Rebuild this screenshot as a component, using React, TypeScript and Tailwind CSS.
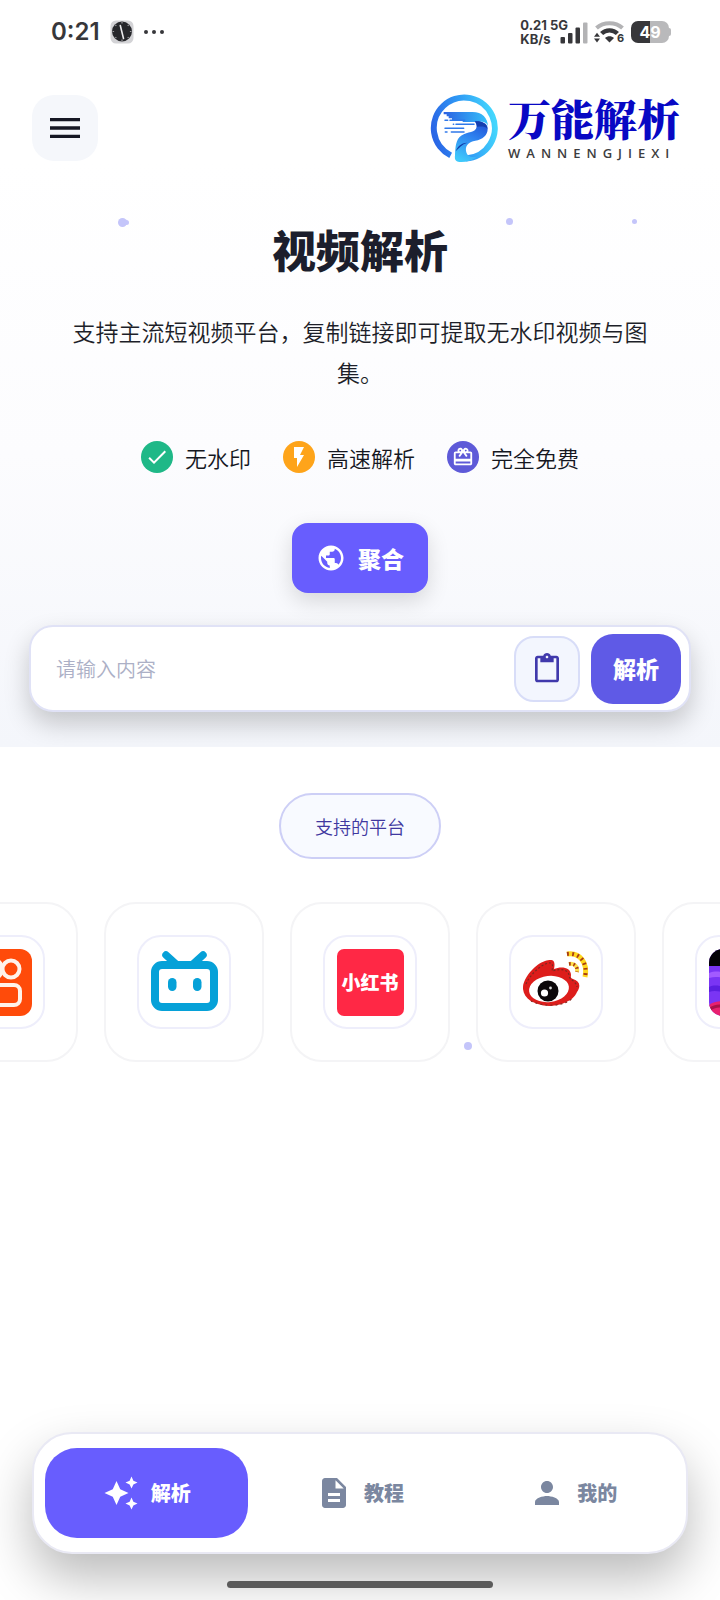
import type { ReactNode } from "react";
import {
  MdAutoAwesome,
  MdCardGiftcard,
  MdCheck,
  MdContentPaste,
  MdDescription,
  MdFlashOn,
  MdMenu,
  MdPerson,
  MdPublic,
} from "react-icons/md";

function ClockAppIcon() {
  return (
    <svg viewBox="0 0 24 24" className="size-6" aria-hidden="true">
      <rect x="0.5" y="0.5" width="23" height="23" rx="5.5" fill="#d3d3d6" />
      <circle cx="12" cy="11.5" r="10" fill="#26272b" />
      <g stroke="#9b9b9f" strokeWidth="1.2">
        <path d="M12 2v1.6M12 19.4V21M2.5 11.5h1.6M19.9 11.5h1.6" />
        <path d="M5.3 4.8l1 1M17.7 17.2l1 1M18.7 4.8l-1 1M6.3 17.2l-1 1" />
      </g>
      <path d="M10.3 5.5l3.2 13" stroke="#e9e9eb" strokeWidth="1.6" strokeLinecap="round" />
    </svg>
  );
}

function SignalIcon() {
  return (
    <svg viewBox="0 0 28 22" className="h-[22px] w-7" aria-hidden="true">
      <rect x="0.5" y="15" width="4.5" height="6.5" rx="1" fill="#37373a" />
      <rect x="8" y="11" width="4.5" height="10.5" rx="1" fill="#37373a" />
      <rect x="15.5" y="5.5" width="4.5" height="16" rx="1" fill="#37373a" />
      <rect x="23" y="0.5" width="4.5" height="21" rx="1" fill="#b3b3b5" />
    </svg>
  );
}

function WifiIcon() {
  return (
    <svg viewBox="0 0 31 26" className="h-[26px] w-[31px]" aria-hidden="true">
      <path d="M2.5 9C9.500 2.500 21.500 2.500 28.500 9" fill="none" stroke="#b3b3b5" strokeWidth="4" />
      <path d="M7.600 14.500C11.800 10.300 19.200 10.300 23.400 14.500" fill="none" stroke="#37373a" strokeWidth="4.400" />
      <path d="M11 19c2.600-2.300 6.400-2.300 9 0L15.500 23.400z" fill="#37373a" />
      <path d="M0 17.800L3 13.800l3 4zM0 19.600L3 23.600l3-4z" fill="#37373a" />
      <text x="23" y="23" fontSize="11" fontWeight="700" fill="#37373a" fontFamily="Inter, sans-serif">
        6
      </text>
    </svg>
  );
}

function StatusBar() {
  return (
    <div className="flex h-16 items-center justify-between pr-[49px] pl-[51px] font-['Inter','Noto_Sans',sans-serif] text-[#37373a]">
      <div className="flex items-center">
        <span className="text-2xl font-semibold">0:21</span>
        <span className="ml-2.5">
          <ClockAppIcon />
        </span>
        <span className="ml-2.5 flex gap-1">
          <i className="size-1 rounded-full bg-[#37373a]" />
          <i className="size-1 rounded-full bg-[#37373a]" />
          <i className="size-1 rounded-full bg-[#37373a]" />
        </span>
      </div>
      <div className="flex items-center">
        <div className="text-[13px] leading-[14px] font-bold">
          <div>0.21 5G</div>
          <div>KB/s</div>
        </div>
        <div className="-ml-2 pt-0.5">
          <SignalIcon />
        </div>
        <div className="ml-1.5">
          <WifiIcon />
        </div>
        <div className="ml-1.5 flex items-center">
          <div className="flex h-[22px] w-[38px] items-center justify-center rounded-[7px] bg-linear-to-r from-[#37373a] from-50% to-[#b9b9bb] to-50% text-base font-bold text-white">
            49
          </div>
          <div className="h-2 w-0.5 rounded-r-sm bg-[#b9b9bb]" />
        </div>
      </div>
    </div>
  );
}

function BrandMark() {
  return (
    <svg viewBox="0 0 204 204" className="size-[68px]" aria-hidden="true">
      <defs>
        <linearGradient id="ring" x1="0" y1="0.6" x2="1" y2="0.4">
          <stop offset="0" stopColor="#2a66e6" />
          <stop offset="0.5" stopColor="#2f9af5" />
          <stop offset="1" stopColor="#44d6fd" />
        </linearGradient>
        <linearGradient id="band" x1="0" y1="0" x2="1" y2="0">
          <stop offset="0" stopColor="#2c62e2" />
          <stop offset="1" stopColor="#35c0fa" />
        </linearGradient>
        <linearGradient id="stem" x1="0.7" y1="0" x2="0.3" y2="1">
          <stop offset="0" stopColor="#2257d8" />
          <stop offset="0.4" stopColor="#2f83f0" />
          <stop offset="1" stopColor="#3fc9fb" />
        </linearGradient>
      </defs>
      <path
        d="M62 184A91.500 91.500 0 1 1 108 193.500"
        fill="none"
        stroke="url(#ring)"
        strokeWidth="18"
      />
      <path
        d="M41 54H128C156 54 174 72 174 98C172 86 160 82 148 84H98V78H66V73H56V67H50V61H41Z"
        fill="url(#band)"
      />
      <g stroke="#2f78ea" strokeWidth="4.500" strokeLinecap="round">
        <path d="M45 79h8M60 79h44M78 91h54M70 91h1M45 103h56M64 114h38M46 114h5" />
      </g>
      <path
        d="M134 82C152 80 172 86 173 102C174 124 158 136 136 140C114 144 106 156 108 170C110 186 124 192 142 188C124 202 100 206 84 203C74 201 74 192 75 184C76 166 76 144 88 130C104 112 130 118 138 104C142 96 138 88 134 82Z"
        fill="url(#stem)"
      />
      <path d="M134 82C152 80 172 88 172 104C165 95 150 98 141 98C141 92 138 86 134 82Z" fill="#153fae" />
      <path d="M77 172C82 158 92 147 112 146C96 151 86 162 77 172Z" fill="#123ba8" />
    </svg>
  );
}

function Header() {
  return (
    <header className="flex items-start justify-between px-8 pt-[31px]">
      <button
        type="button"
        aria-label="菜单"
        className="flex size-[66px] items-center justify-center rounded-[22px] bg-[#f5f7fb] text-[#161824]"
      >
        <MdMenu className="size-10" />
      </button>
      <a href="#home" className="-mt-px flex items-center gap-2.5 pr-2">
        <BrandMark />
        <span className="flex flex-col whitespace-nowrap">
          <span className="font-['Noto_Serif_CJK_SC','Noto_Serif_SC','Noto_Sans_CJK_SC',serif] text-[43px] leading-[46px] font-black text-[#0808c4]">
            万能解析
          </span>
          <span className="pt-1 font-['Open_Sans',sans-serif] text-[13px] leading-4 font-semibold tracking-[6px] text-[#3d3d40]">
            WANNENGJIEXI
          </span>
        </span>
      </a>
    </header>
  );
}

function Feature({ color, icon, label }: { color: string; icon: ReactNode; label: string }) {
  return (
    <li className="flex items-center gap-3">
      <span className={`flex size-8 items-center justify-center rounded-full text-white ${color}`}>{icon}</span>
      <span className="text-[22px] leading-8">{label}</span>
    </li>
  );
}

function Hero() {
  return (
    <section className="overflow-hidden bg-linear-to-b from-white via-[#fcfcfe] via-50% to-[#f4f6fb] px-[29px] pt-[51px] pb-[35px]">
      <h1 className="text-center text-[44px] leading-[72px] font-black text-[#1c1e2c]">视频解析</h1>
      <p className="mx-auto mt-[26px] max-w-[600px] text-center text-[23px] leading-[41px] font-[350] text-[#1d1f29]">
        支持主流短视频平台，复制链接即可提取无水印视频与图集。
      </p>
      <ul className="mt-12 flex justify-center gap-8 font-[350] text-[#15171f]">
        <Feature color="bg-[#1fb887]" icon={<MdCheck className="size-6" />} label="无水印" />
        <Feature color="bg-[#fea41a]" icon={<MdFlashOn className="size-6" />} label="高速解析" />
        <Feature color="bg-[#5e5ad8]" icon={<MdCardGiftcard className="size-[22px]" />} label="完全免费" />
      </ul>
      <div className="mt-[50px] flex justify-center">
        <button
          type="button"
          className="flex h-[70px] items-center gap-3 rounded-2xl bg-[#685dfe] px-6 text-[23px] font-black text-white shadow-[0_8px_22px_rgba(0,0,0,0.14)]"
        >
          <MdPublic className="size-[30px]" />
          聚合
        </button>
      </div>
      <form
        onSubmit={(e) => e.preventDefault()}
        className="mt-8 flex h-[87px] items-center gap-[11px] rounded-[24px] border-2 border-[#e0e2f6] bg-white pr-2 pl-[25px] shadow-[0_12px_26px_rgba(0,0,0,0.2)]"
      >
        <input
          type="text"
          aria-label="请输入内容"
          placeholder="请输入内容"
          className="min-w-0 flex-1 bg-transparent text-xl font-[350] text-[#1d1f29] outline-none placeholder:text-[#acb0c6]"
        />
        <button
          type="button"
          aria-label="粘贴"
          className="flex size-[66px] items-center justify-center rounded-[20px] border-2 border-[#d8ddf8] bg-[#f3f6fe] text-[#4039ac]"
        >
          <MdContentPaste className="size-8" />
        </button>
        <button
          type="submit"
          className="h-[70px] rounded-[22px] bg-[#5f5ae6] px-[22px] text-[23px] font-black text-white"
        >
          解析
        </button>
      </form>
    </section>
  );
}

function KuaishouLogo() {
  return (
    <svg viewBox="0 0 67 67" className="size-[67px]" role="img" aria-label="快手">
      <rect width="67" height="67" rx="12" fill="#ff4b0a" />
      <g fill="none" stroke="#fff3ea" strokeWidth="4">
        <circle cx="27" cy="20" r="10" />
        <circle cx="46" cy="20" r="8.500" />
        <rect x="20" y="36" width="35" height="20" rx="6" />
        <path d="M20 41l-9-4v18l9-4" />
      </g>
    </svg>
  );
}

function BilibiliLogo() {
  return (
    <svg viewBox="0 0 67 67" className="size-[67px]" role="img" aria-label="哔哩哔哩">
      <path d="M15 6l11 10M52 6L41 16" stroke="#06a1d8" strokeWidth="7.500" strokeLinecap="round" />
      <rect x="4" y="16" width="59" height="42" rx="7" fill="#fff" stroke="#06a1d8" strokeWidth="8" />
      <rect x="17" y="29" width="8.500" height="13" rx="4.200" fill="#06a1d8" />
      <rect x="42" y="29" width="8.500" height="13" rx="4.200" fill="#06a1d8" />
    </svg>
  );
}

function XiaohongshuLogo() {
  return (
    <div className="flex size-[67px] items-center justify-center rounded-[7px] bg-[#ff2845] text-[19px] font-black text-white">
      小红书
    </div>
  );
}

function WeiboLogo() {
  return (
    <svg viewBox="0 0 67 67" className="size-[67px]" role="img" aria-label="微博">
      <path
        d="M0 40C-1 30 12 15 22 12C29 10 33 10 31 20C38 17 48 18 48 26C48 28 47 29 50 30C57 32 58 37 54 43C50 53 35 57 26 57C11 56 1 50 0 40Z"
        fill="#dd1d1b"
      />
      <path
        d="M3 35C7 26 16 17 25 14C30 13 30 16 29 22C39 19 46 21 46 27C47 31 53 32 54 38"
        fill="none"
        stroke="#7a2a22"
        strokeWidth="1.200"
        strokeDasharray="2 2"
      />
      <path d="M8 52C20 58 40 58 50 49" fill="none" stroke="#8a2c24" strokeWidth="1.200" strokeDasharray="2 3" />
      <ellipse cx="26" cy="40" rx="20" ry="13" fill="#fff" transform="rotate(-7 26 40)" />
      <circle cx="25" cy="42" r="10.500" fill="#0b0709" />
      <circle cx="21.500" cy="44" r="3.600" fill="#fff" />
      <circle cx="27.500" cy="39" r="1.400" fill="#d9d9d9" />
      <path d="M44 5C57 3 65 14 62 28" fill="none" stroke="#ffd81f" strokeWidth="5" />
      <path d="M44 5C57 3 65 14 62 28" fill="none" stroke="#a83a12" strokeWidth="4" strokeDasharray="1.800 3.400" />
      <path d="M46 15C52 14 55 18 54 23" fill="none" stroke="#ffe04a" strokeWidth="4" />
      <path d="M46 15C52 14 55 18 54 23" fill="none" stroke="#a83a12" strokeWidth="3.500" strokeDasharray="1.600 2.800" />
    </svg>
  );
}

function VividLogo() {
  return (
    <svg viewBox="0 0 67 67" className="size-[67px]" role="img" aria-label="短视频">
      <defs>
        <clipPath id="vivid">
          <rect width="67" height="67" rx="14" />
        </clipPath>
      </defs>
      <g clipPath="url(#vivid)">
        <rect width="67" height="67" fill="#7a35f4" />
        <path d="M0 0H67V17H0Z" fill="#050308" />
        <path d="M0 24C10 20 16 26 30 22V27C18 31 9 26 0 29Z" fill="#a25bff" />
        <path d="M0 38C8 34 14 40 26 36V42C14 45 8 40 0 43Z" fill="#5b1fe0" />
        <path d="M0 56C8 50 20 52 67 54V67H0Z" fill="#e8206f" />
        <path d="M0 61C8 54 18 58 30 60" stroke="#a8124a" strokeWidth="3" fill="none" />
      </g>
    </svg>
  );
}

function Platforms() {
  const logos = [
    { name: "kuaishou", mark: <KuaishouLogo /> },
    { name: "bilibili", mark: <BilibiliLogo /> },
    { name: "xiaohongshu", mark: <XiaohongshuLogo /> },
    { name: "weibo", mark: <WeiboLogo /> },
    { name: "vivid", mark: <VividLogo /> },
  ];
  return (
    <section className="flex flex-col items-center overflow-hidden pt-[46px]">
      <h2 className="flex h-[66px] items-center rounded-full border-2 border-[#cdcff6] bg-[#f8faff] px-[34px] text-lg font-[350] text-[#40389f]">
        支持的平台
      </h2>
      <ul className="mt-[43px] -ml-[82px] flex gap-[26px] self-start">
        {logos.map((logo) => (
          <li
            key={logo.name}
            className="flex size-40 shrink-0 items-center justify-center rounded-[32px] border-2 border-[#f4f4f6] bg-white"
          >
            <div className="flex size-[94px] items-center justify-center rounded-[24px] border-2 border-[#eeeefb]">
              {logo.mark}
            </div>
          </li>
        ))}
      </ul>
    </section>
  );
}

function BottomNav() {
  const items = [
    { label: "解析", icon: <MdAutoAwesome className="size-9" />, active: true },
    { label: "教程", icon: <MdDescription className="size-9" />, active: false },
    { label: "我的", icon: <MdPerson className="size-9" />, active: false },
  ];
  return (
    <footer className="mt-auto overflow-hidden px-8 pt-20">
      <nav className="grid h-[122px] grid-cols-3 gap-2.5 rounded-[40px] border-2 border-[#e9e9f4] bg-white px-[11px] py-[14px] shadow-[0_24px_50px_rgba(0,0,0,0.27)]">
        {items.map((item) => (
          <a
            key={item.label}
            href={`#${item.label}`}
            aria-current={item.active ? "page" : undefined}
            className={
              item.active
                ? "flex items-center justify-center gap-3 rounded-[32px] bg-[#685dfe] text-xl font-black text-white"
                : "flex items-center justify-center gap-3 rounded-[32px] text-xl font-black text-[#7b87a0]"
            }
          >
            {item.icon}
            {item.label}
          </a>
        ))}
      </nav>
      <div className="relative mx-auto mt-[27px] mb-3 h-[7px] w-[266px] rounded-full bg-[#5b5b5b]" />
    </footer>
  );
}

function Particles() {
  return (
    <div aria-hidden="true" className="pointer-events-none">
      <i className="absolute top-[218px] left-[118px] size-[9px] rounded-full bg-[#c4c5fa]" />
      <i className="absolute top-[220px] left-[124px] size-[5px] rounded-full bg-[#c4c5fa]" />
      <i className="absolute top-[218px] left-[506px] size-[7px] rounded-full bg-[#c4c5fa]" />
      <i className="absolute top-[219px] left-[632px] size-[5px] rounded-full bg-[#c4c5fa]" />
      <i className="absolute top-[1042px] left-[464px] size-2 rounded-full bg-[#c4c5fa]" />
    </div>
  );
}

export default function App() {
  return (
    <div className="relative flex min-h-screen flex-col overflow-x-hidden bg-white font-['Noto_Sans_CJK_SC',sans-serif]">
      <StatusBar />
      <Header />
      <Hero />
      <Platforms />
      <BottomNav />
      <Particles />
    </div>
  );
}
